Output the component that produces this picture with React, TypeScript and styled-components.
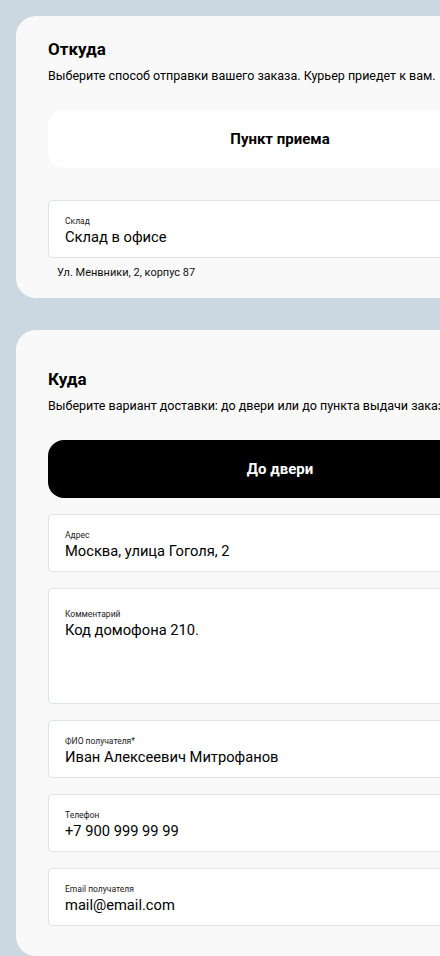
import styled, { createGlobalStyle } from 'styled-components';

const GlobalStyle = createGlobalStyle`
  html, body {
    margin: 0;
    padding: 0;
    background: #cbd8e1;
    overflow-x: hidden;
  }
  body {
    font-family: Roboto, "Noto Sans", sans-serif;
    color: #000;
  }
`;

type Field = {
  label: string;
  value: string;
  multiline?: boolean;
};

const toFields: Field[] = [
  { label: 'Адрес', value: 'Москва, улица Гоголя, 2' },
  { label: 'Комментарий', value: 'Код домофона 210.', multiline: true },
  { label: 'ФИО получателя*', value: 'Иван Алексеевич Митрофанов' },
  { label: 'Телефон', value: '+7 900 999 99 99' },
  { label: 'Email получателя', value: 'mail@email.com' },
];

export default function App() {
  return (
    <>
      <GlobalStyle />
      <Page>
        <Card $padTop={22} $padBottom={18}>
          <Title>Откуда</Title>
          <Subtitle>Выберите способ отправки вашего заказа. Курьер приедет к вам.</Subtitle>
          <ModeButton $variant="light">Пункт приема</ModeButton>
          <FieldBox $top={32}>
            <Label>Склад</Label>
            <Value>Склад в офисе</Value>
          </FieldBox>
          <Hint>Ул. Менвники, 2, корпус 87</Hint>
        </Card>

        <Card $padTop={38} $padBottom={30}>
          <Title>Куда</Title>
          <Subtitle>Выберите вариант доставки: до двери или до пункта выдачи заказов.</Subtitle>
          <ModeButton $variant="dark">До двери</ModeButton>
          <FieldList>
            {toFields.map((f) => (
              <FieldBox key={f.label} $tall={f.multiline}>
                <Label>{f.label}</Label>
                <Value>{f.value}</Value>
              </FieldBox>
            ))}
          </FieldList>
        </Card>
      </Page>
    </>
  );
}

const Page = styled.div`
  width: 528px;
  padding: 16px;
  display: flex;
  flex-direction: column;
  gap: 32px;
`;

const Card = styled.section<{ $padTop: number; $padBottom: number }>`
  background: #f9f9f9;
  border-radius: 20px;
  padding: ${(p) => p.$padTop}px 32px ${(p) => p.$padBottom}px;
  display: flex;
  flex-direction: column;
`;

const Title = styled.h2`
  margin: 0;
  font-size: 17px;
  line-height: 22px;
  font-weight: 700;
`;

const Subtitle = styled.p`
  margin: 7px 0 0;
  font-size: 12.5px;
  line-height: 18px;
  white-space: nowrap;
`;

const ModeButton = styled.div<{ $variant: 'light' | 'dark' }>`
  margin-top: 25px;
  height: 58px;
  border-radius: 16px;
  display: flex;
  align-items: center;
  justify-content: center;
  font-size: 15px;
  font-weight: 700;
  background: ${(p) => (p.$variant === 'dark' ? '#000' : '#fff')};
  color: ${(p) => (p.$variant === 'dark' ? '#fff' : '#000')};
`;

const FieldList = styled.div`
  margin-top: 16px;
  display: flex;
  flex-direction: column;
  gap: 16px;
`;

const FieldBox = styled.div<{ $top?: number; $tall?: boolean }>`
  margin-top: ${(p) => p.$top ?? 0}px;
  box-sizing: border-box;
  height: ${(p) => (p.$tall ? 116 : 58)}px;
  background: #fff;
  border: 1px solid #e1e3ea;
  border-radius: 4px;
  padding: ${(p) => (p.$tall ? 20 : 15)}px 16px 0;
  display: flex;
  flex-direction: column;
`;

const Label = styled.span`
  font-size: 8.5px;
  line-height: 11px;
  color: #222;
`;

const Value = styled.span`
  font-size: 14.7px;
  line-height: 20px;
  color: #000;
  white-space: nowrap;
`;

const Hint = styled.div`
  margin-top: 8px;
  padding-left: 9px;
  font-size: 11px;
  line-height: 14px;
  color: #111;
`;
